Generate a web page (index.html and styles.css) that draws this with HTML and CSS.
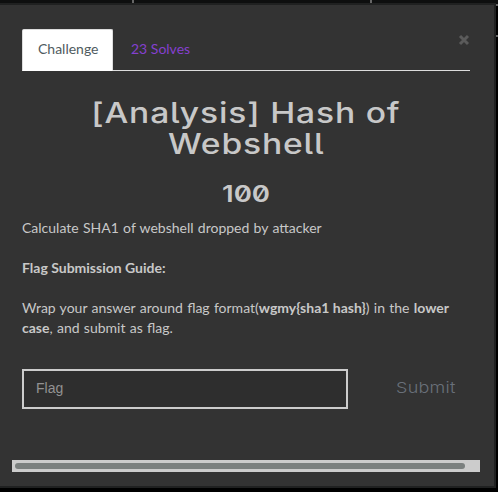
FILE: index.html
```
<!DOCTYPE html>
<html lang="en">
<head>
<meta charset="utf-8">
<title>Challenge</title>
<link rel="stylesheet" href="styles.css">
</head>
<body>
<i class="rule rule-a"></i><i class="rule rule-b"></i><i class="rule rule-c"></i><i class="rule rule-d"></i>
<main class="modal">
  <button class="close" aria-label="Close"><svg width="12" height="12" viewBox="0 0 12 12"><path d="M2 2l8 8M10 2l-8 8" stroke="#5b5b5b" stroke-width="3"/></svg></button>
  <nav class="tabs"><a class="tab active">Challenge</a><a class="tab">23 Solves</a></nav>
  <h2 class="title"><span class="wide">[Analysis] Hash of</span><br><span class="wide">Webshell</span></h2>
  <h3 class="points"><span class="wide">100</span></h3>
  <div class="description">
    <p>Calculate SHA1 of webshell dropped by attacker</p>
    <p><b>Flag Submission Guide:</b></p>
    <p>Wrap your answer around flag format(<b>wgmy{sha1 hash}</b>) in the <b>lower case</b>, and submit as flag.</p>
  </div>
  <form class="answer">
    <input class="flag" type="text" placeholder="Flag">
    <button class="submit" type="button"><span class="wide">Submit</span></button>
  </form>
  <div class="scrollbar"><div class="thumb"></div></div>
</main>
</body>
</html>
```
FILE: styles.css
```
* { box-sizing: border-box; }
body {
  margin: 0;
  width: 498px;
  height: 492px;
  padding-top: 3px;
  overflow: hidden;
  background: linear-gradient(#0e0f0f 4px, #000 4px);
  font-family: Lato, sans-serif;
  font-size: 14px;
  line-height: 20px;
  color: #c8c8c8;
}
.rule { position: absolute; background: #666; }
.rule-a { left: 132px; top: 0; width: 2px; height: 3px; }
.rule-b { left: 370px; top: 0; width: 2px; height: 3px; }
.rule-c { left: 496px; top: 4px; width: 2px; height: 2px; }
.rule-d { left: 496px; top: 35px; width: 2px; height: 2px; }
.modal {
  position: relative;
  width: 496px;
  height: 485px;
  padding: 24px 24px 0 22px;
  background: #333;
  border: solid #202121;
  border-width: 2px 2px 2px 0;
}
.close {
  position: absolute;
  left: 458px;
  top: 29px;
  padding: 0;
  border: 0;
  background: none;
  line-height: 0;
}
.tabs {
  display: flex;
  width: 448px;
  height: 42px;
  border-bottom: 1px solid #ddd;
}
.tab {
  height: 42px;
  padding: 9px 15px;
  margin-right: 2px;
  border: 1px solid transparent;
  color: #8540cf;
}
.tab.active {
  width: 91px;
  background: #fff;
  border-color: #ddd;
  border-bottom-color: #fff;
  border-radius: 2px 2px 0 0;
  color: #4f5b60;
}
.title, .points {
  width: 448px;
  margin: 0;
  font-family: Inter, sans-serif;
  text-align: center;
  font-feature-settings: "zero", "cv05";
  white-space: nowrap;
}
.wide { display: inline-block; transform: scaleX(1.2); }
.title {
  padding-top: 27px;
  font-size: 28px;
  font-weight: 500;
  line-height: 31px;
  letter-spacing: 0.7px;
}
.points {
  margin-top: 21px;
  font-size: 23px;
  font-weight: 600;
  line-height: 26px;
}
.description { width: 448px; margin-top: 11px; word-spacing: 0.7px; }
.description b { word-spacing: 0; }
.description p { margin: 0 0 20px; }
.answer { display: flex; margin-top: 31px; }
.flag {
  width: 326px;
  height: 40px;
  padding: 0 12px 2px;
  border: 2px solid #ccc;
  border-radius: 0;
  background: #2e2e2e;
  color: #ccc;
  font: 14px "Liberation Sans", sans-serif;
}
.flag::placeholder { color: #929292; opacity: 1; }
.submit {
  width: 122px;
  height: 38px;
  padding: 0 14px 2px 0;
  border: 0;
  background: none;
  color: #697079;
  font: 300 15px Inter, sans-serif;
  letter-spacing: 0.2px;
  text-align: right;
}
.submit .wide { transform-origin: right; }
.scrollbar {
  width: 468px;
  height: 12px;
  margin: 51px 0 0 -10px;
  padding: 3px;
  background: #ccc;
}
.thumb {
  width: 450px;
  height: 6px;
  border-radius: 3px;
  background: #7b807f;
}
```
